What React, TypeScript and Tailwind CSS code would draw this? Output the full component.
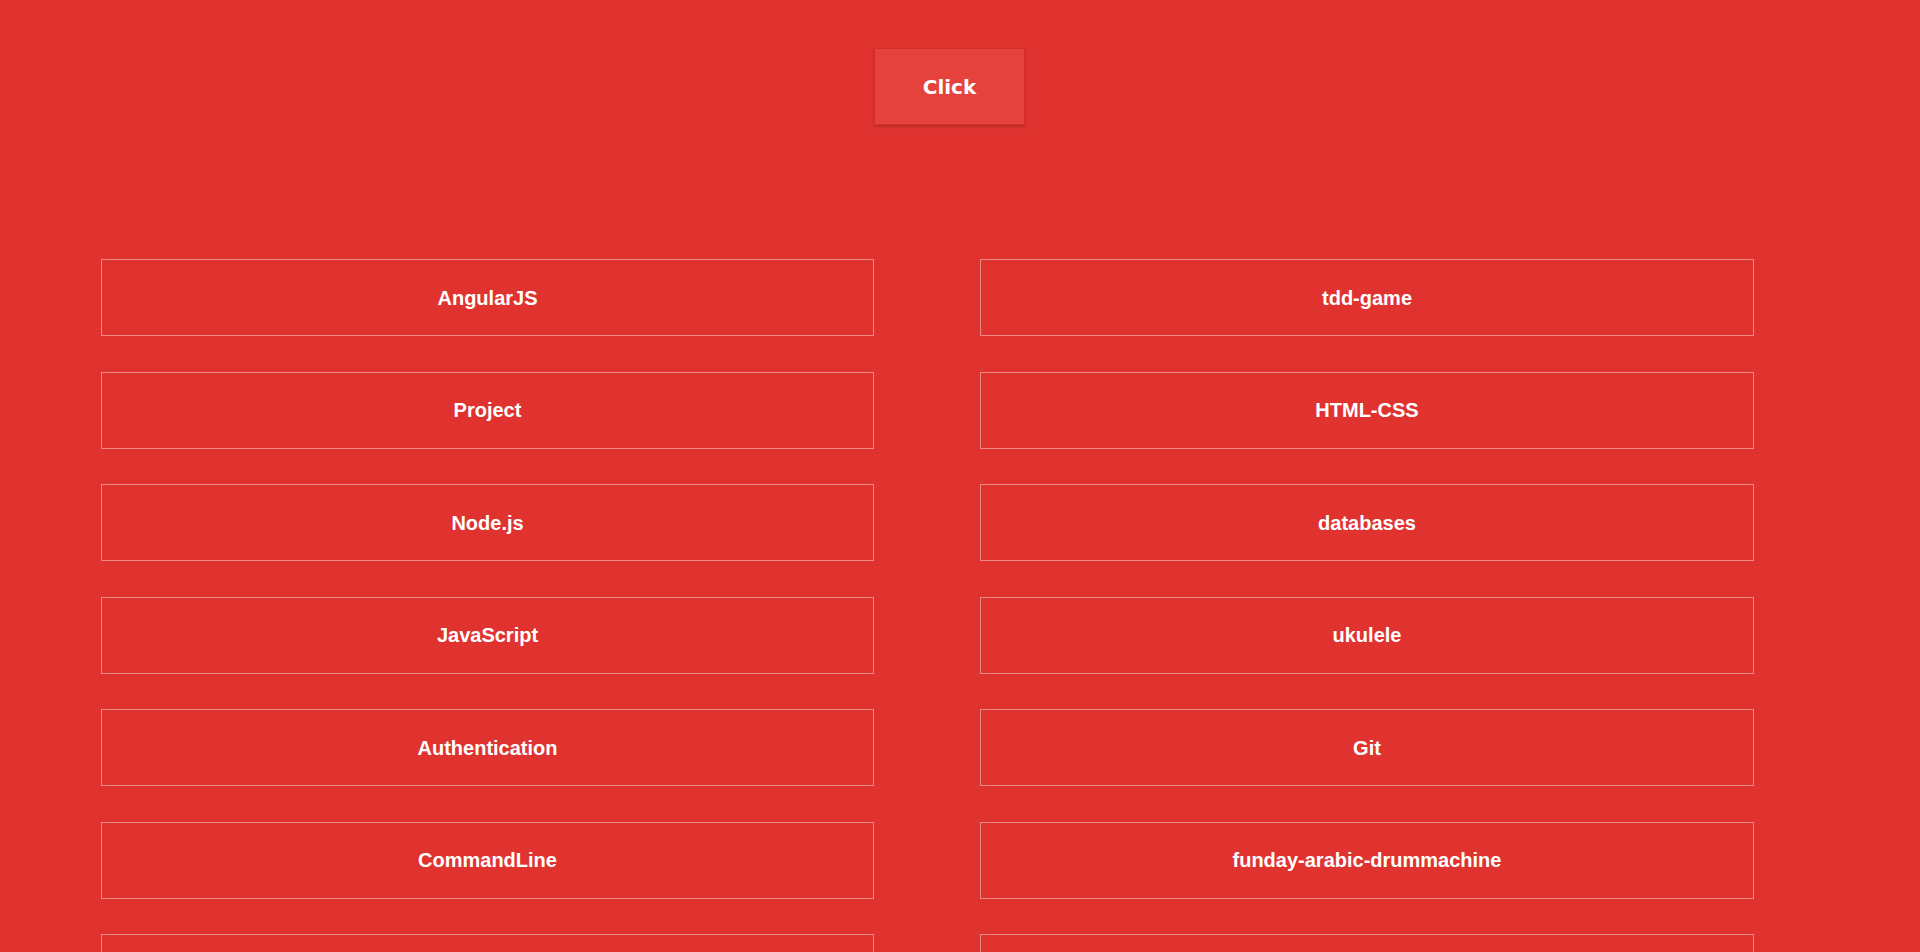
import React from 'react';

const repos = [
  ['AngularJS', 'tdd-game'],
  ['Project', 'HTML-CSS'],
  ['Node.js', 'databases'],
  ['JavaScript', 'ukulele'],
  ['Authentication', 'Git'],
  ['CommandLine', 'funday-arabic-drummachine'],
  ['React', 'portfolio'],
];

const App = () => {
  return (
    <div className="min-h-screen bg-[#e0332f] pb-12">
      <div className="pt-[48px] pl-[874px]">
        <button className="w-[151px] h-[77px] bg-[#e5423d] border border-[#d92d29] shadow-[0_2px_3px_rgba(0,0,0,0.18)] text-white font-bold text-[20px] pt-[1px] font-['DejaVu_Sans',sans-serif]">
          Click
        </button>
      </div>

      <div className="mt-[134px] pl-[101px] grid grid-cols-[773px_774px] gap-x-[106px] gap-y-[35.5px]">
        {repos.flat().map((name) => (
          <div
            key={name}
            className="h-[77px] border border-[#ee8a86] flex items-center justify-center text-white font-bold text-[20px] font-['Liberation_Sans',Arial,sans-serif]"
          >
            {name}
          </div>
        ))}
      </div>
    </div>
  );
};

export default App;
